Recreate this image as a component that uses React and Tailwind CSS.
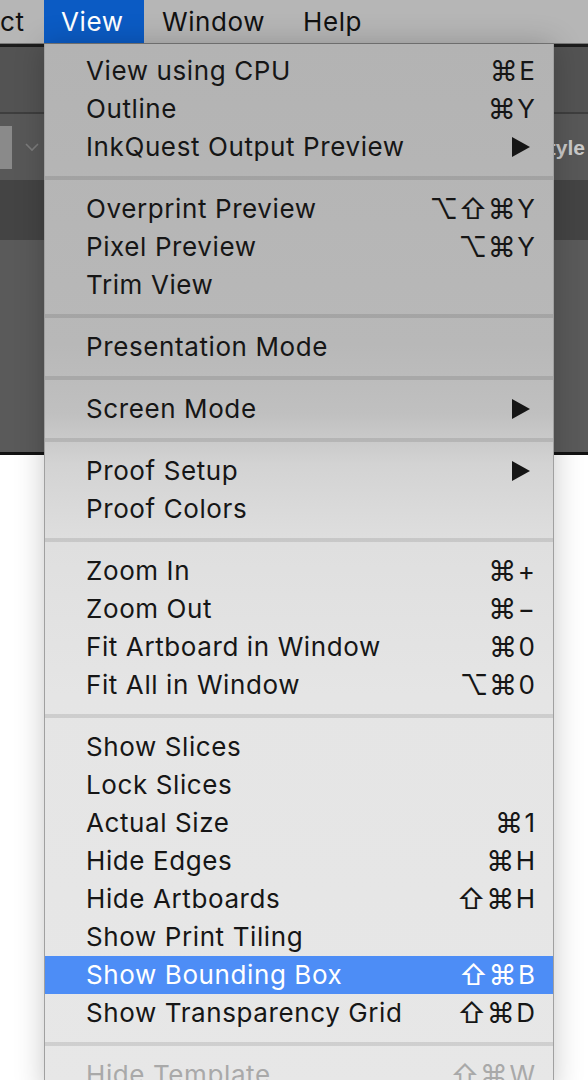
const groups = [
    [
        {label: 'View using CPU', keys: '⌘E'},
        {label: 'Outline', keys: '⌘Y'},
        {label: 'InkQuest Output Preview', sub: true},
    ],
    [
        {label: 'Overprint Preview', keys: '⌥⇧⌘Y'},
        {label: 'Pixel Preview', keys: '⌥⌘Y'},
        {label: 'Trim View'},
    ],
    [
        {label: 'Presentation Mode'},
    ],
    [
        {label: 'Screen Mode', sub: true},
    ],
    [
        {label: 'Proof Setup', sub: true},
        {label: 'Proof Colors'},
    ],
    [
        {label: 'Zoom In', keys: '⌘+'},
        {label: 'Zoom Out', keys: '⌘−'},
        {label: 'Fit Artboard in Window', keys: '⌘0'},
        {label: 'Fit All in Window', keys: '⌥⌘0'},
    ],
    [
        {label: 'Show Slices'},
        {label: 'Lock Slices'},
        {label: 'Actual Size', keys: '⌘1'},
        {label: 'Hide Edges', keys: '⌘H'},
        {label: 'Hide Artboards', keys: '⇧⌘H'},
        {label: 'Show Print Tiling'},
        {label: 'Show Bounding Box', keys: '⇧⌘B', active: true},
        {label: 'Show Transparency Grid', keys: '⇧⌘D'},
    ],
    [
        {label: 'Hide Template', keys: '⇧⌘W', disabled: true},
    ],
]

const symbols = '⌘⌥⇧'

function Shortcut({keys}) {
    const chars = keys.split('')
    return (
        <span className="flex items-center tracking-normal">
            {chars.map((k, i) => symbols.includes(k)
                ? <span key={i} className="inline-block w-[29px] text-center text-[28px]">{k}</span>
                : <span key={i} className="inline-block ml-[1px]">{k}</span>
            )}
        </span>
    )
}

function MenuItem({item}) {
    let color = 'text-[#161616]'
    if (item.active) color = 'bg-[#4d8df6] text-white'
    if (item.disabled) color = 'text-[#a9a9a9]'

    return (
        <div className={`h-[38px] flex items-center justify-between pl-[41px] pr-[18px] ${color}`}>
            <span>{item.label}</span>
            {item.keys && <Shortcut keys={item.keys}/>}
            {item.sub && (
                <svg width="18" height="20" viewBox="0 0 18 20" className="mr-[5px]">
                    <path d="M0 0 L18 10 L0 20 Z" fill="currentColor"/>
                </svg>
            )}
        </div>
    )
}

export default function App() {
    return (
        <div className="relative w-full h-[1080px] overflow-hidden bg-white font-['Inter','DejaVu_Sans',sans-serif] text-[26px] tracking-[0.6px] leading-none">
            {/* menu bar */}
            <div className="h-[44px] flex items-stretch bg-[#b6b6b6] text-[#111] border-b border-[#7a7a7a]">
                <div className="w-[44px] flex items-center">ct</div>
                <div className="w-[100px] flex items-center pl-[17px] bg-[#0b5bc4] text-white">View</div>
                <div className="w-[159px] flex items-center pl-[18px]">Window</div>
                <div className="flex items-center">Help</div>
            </div>

            {/* app window behind the menu */}
            <div className="h-[411px] flex flex-col bg-[#5a5a5a]">
                <div className="h-[3px] bg-[#1c1c1c]"/>
                <div className="h-[67px] bg-[#535353] border-b-2 border-[#3e3e3e]"/>
                <div className="h-[66px] bg-[#585858] flex items-center justify-between pr-[3px]">
                    <div className="flex items-center gap-[12px]">
                        <div className="w-[12px] h-[43px] bg-[#8a8a8a]"/>
                        <svg width="16" height="10" viewBox="0 0 16 10">
                            <path d="M2 2 L8 8 L14 2" stroke="#7c7c7c" strokeWidth="1.6" fill="none"/>
                        </svg>
                    </div>
                    <span className="text-[21px] tracking-normal text-[#c9c9c9] font-['Liberation_Sans',sans-serif] font-bold">Style</span>
                </div>
                <div className="h-[60px] bg-[#444444]"/>
                <div className="flex-1 bg-[#5a5a5a]"/>
                <div className="h-[3px] bg-[#121212]"/>
            </div>

            {/* view menu */}
            <div className="absolute left-[44px] top-[44px] w-[510px] pt-[8px] border-x border-[#a0a0a0] shadow-[0_0_28px_rgba(0,0,0,0.22)] bg-[linear-gradient(to_bottom,#b3b3b3_0px,#b8b8b8_300px,#c0c0c0_370px,#d3d3d3_420px,#dfdfdf_500px,#e5e5e5_650px,#e7e7e7_100%)]">
                {groups.map((group, gi) => (
                    <div key={gi}>
                        {gi > 0 && (
                            <div className="h-[24px] flex items-center">
                                <div className="w-full h-[4px] bg-black/10"/>
                            </div>
                        )}
                        {group.map(item => <MenuItem key={item.label} item={item}/>)}
                    </div>
                ))}
            </div>
        </div>
    )
}
